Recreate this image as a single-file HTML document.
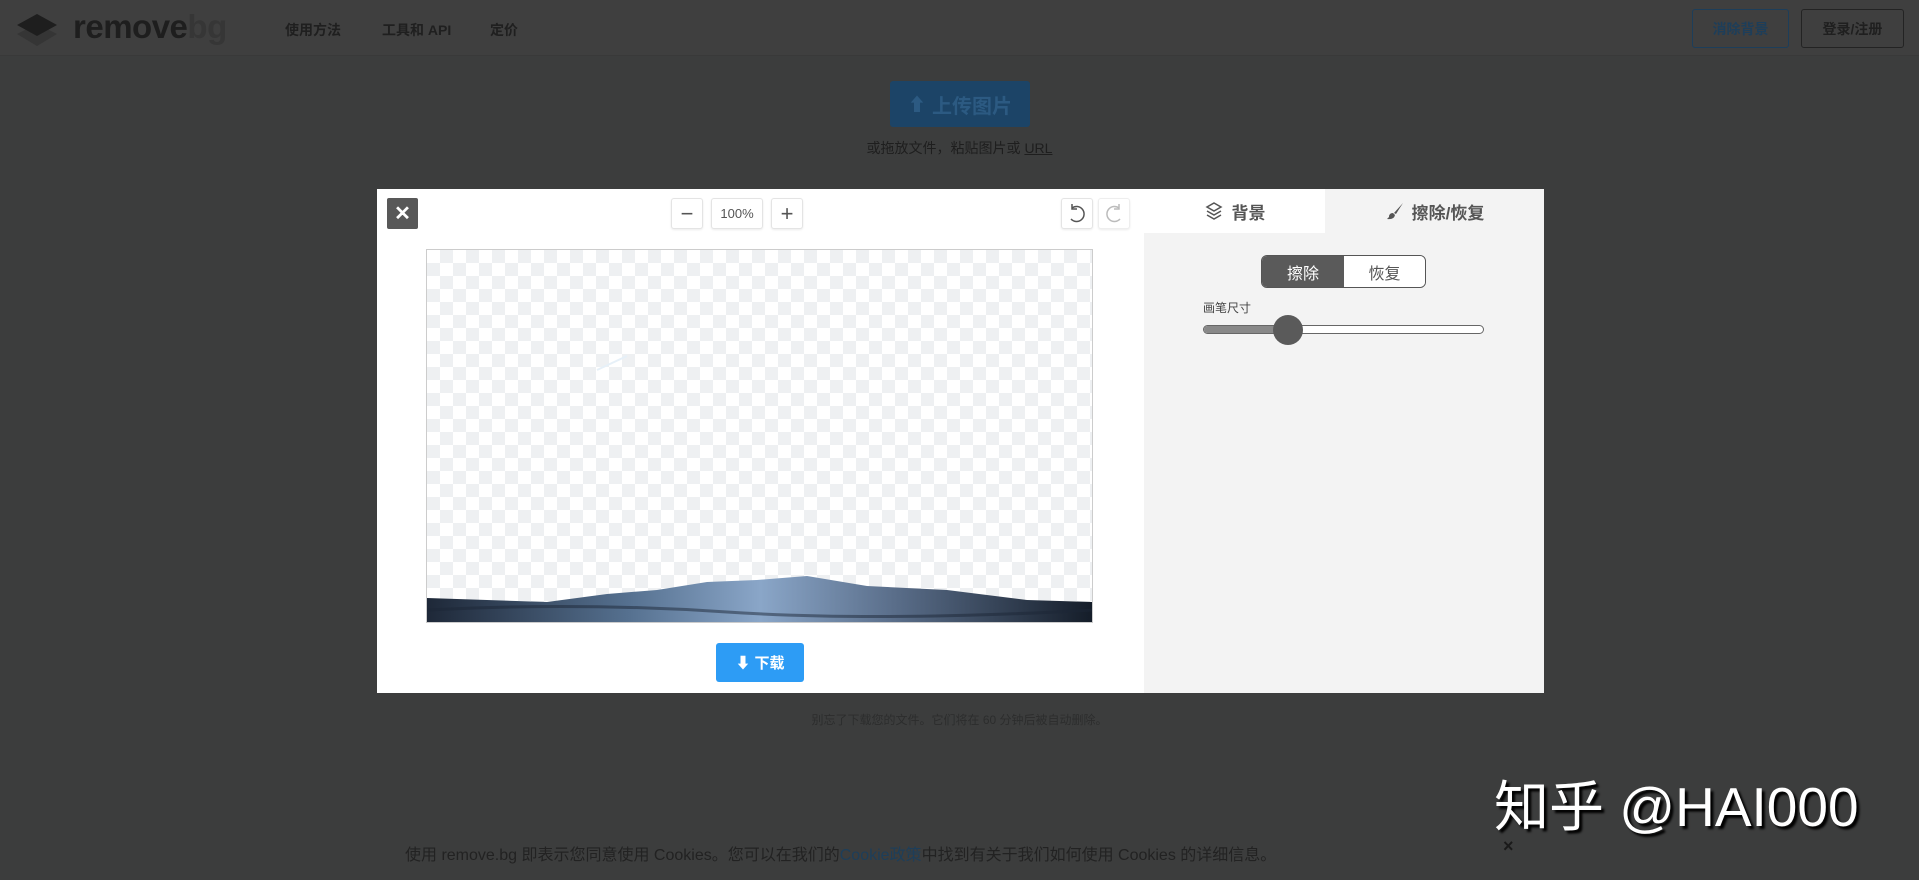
<!DOCTYPE html>
<html><head><meta charset="utf-8"><style>
*{box-sizing:border-box;margin:0;padding:0}
body{width:1919px;height:880px;background:#3c3d3d;font-family:"Liberation Sans","Noto Sans CJK SC",sans-serif;position:relative;overflow:hidden}
.a{position:absolute}
.nav{left:0;top:0;width:1919px;height:56px;background:#3f3f3f;border-bottom:1px solid #393939}
.navl{color:#1f1f1f;font-size:14px;font-weight:bold;top:20px}
.btn{border-radius:3px;font-size:14px;font-weight:bold;display:flex;align-items:center;justify-content:center}
.modal{left:377px;top:189px;width:1167px;height:504px;background:#fff}
.sq{width:32px;height:31px;border:1px solid #e4e4e4;border-radius:3px;background:#fff;display:flex;align-items:center;justify-content:center;color:#555;box-shadow:0 1px 2px rgba(0,0,0,.08)}
.canvas{left:49px;top:60px;width:667px;height:374px;border:1px solid #ccc;background-color:#fff;background-image:linear-gradient(45deg,#eef0f2 25%,transparent 25%,transparent 75%,#eef0f2 75%),linear-gradient(45deg,#eef0f2 25%,transparent 25%,transparent 75%,#eef0f2 75%);background-size:26px 26px;background-position:0 0,13px 13px;overflow:hidden}
</style></head><body>
<div class="a nav"></div>
<svg class="a" style="left:15px;top:14px" width="44" height="34" viewBox="0 0 44 34"><path d="M22 10 L42 20 L22 32 L2 20Z" fill="#353535"/><path d="M22 0 L42 11 L22 22 L2 11Z" fill="#1e1e1e"/></svg>
<div class="a" style="left:73px;top:8px;font-size:33px;font-weight:bold;color:#1e1e1e;letter-spacing:-0.5px">remove<span style="color:#363636">bg</span></div>
<div class="a navl" style="left:285px">使用方法</div>
<div class="a navl" style="left:382px">工具和 API</div>
<div class="a navl" style="left:490px">定价</div>
<div class="a btn" style="left:1692px;top:9px;width:97px;height:39px;border:1px solid #1d3e5a;color:#1d3e5a">消除背景</div>
<div class="a btn" style="left:1801px;top:9px;width:103px;height:39px;border:1px solid #232323;color:#1f1f1f">登录/注册</div>
<div class="a btn" style="left:890px;top:81px;width:140px;height:46px;background:#1c4467;color:#2c5a82;font-size:20px"><span style="font-size:18px;margin-right:6px">⬆</span>上传图片</div>
<div class="a" style="left:0;width:1919px;top:138px;text-align:center;font-size:14px;color:#1e1e1e">或拖放文件，粘贴图片或 <u>URL</u></div>
<div class="a" style="left:0;width:1919px;top:711px;text-align:center;font-size:12px;color:#2c2d2d">别忘了下载您的文件。它们将在 60 分钟后被自动删除。</div>

<div class="a modal">
 <div class="a" style="left:10px;top:9px;width:31px;height:31px;background:#585858;border-radius:2px;color:#fff;font-size:20px;font-weight:bold;display:flex;align-items:center;justify-content:center">✕</div>
 <div class="a sq" style="left:294px;top:9px;font-size:22px">−</div>
 <div class="a sq" style="left:334px;top:9px;width:52px;font-size:13px">100%</div>
 <div class="a sq" style="left:394px;top:9px;font-size:22px">+</div>
 <div class="a sq" style="left:684px;top:9px"><svg width="22" height="22" viewBox="0 0 22 22" fill="none" stroke="#555" stroke-width="1.5"><path d="M6 5 A7.5 7.5 0 1 1 5 16"/><path d="M6 1 V6 H11"/></svg></div>
 <div class="a sq" style="left:721px;top:9px;border-color:#eee"><svg width="22" height="22" viewBox="0 0 22 22" fill="none" stroke="#bbb" stroke-width="1.5"><path d="M16 5 A7.5 7.5 0 1 0 17 16"/><path d="M16 1 V6 H11"/></svg></div>
 <div class="a canvas">
  <svg class="a" style="left:0;top:0" width="667" height="374" viewBox="0 0 667 374"><defs><linearGradient id="m" x1="0" x2="1"><stop offset="0" stop-color="#1e2838"/><stop offset=".3" stop-color="#55708f"/><stop offset=".5" stop-color="#8aa6c8"/><stop offset=".7" stop-color="#5a6e8a"/><stop offset="1" stop-color="#141c28"/></linearGradient></defs><path d="M0 348 L60 350 L120 352 L180 344 L230 340 L280 332 L330 330 L380 326 L440 336 L520 340 L600 350 L667 352 L667 374 L0 374Z" fill="url(#m)"/><path d="M0 360 Q150 352 300 362 T667 360" stroke="#1b2535" stroke-width="3" fill="none" opacity=".5"/><path d="M200 106 L170 120" stroke="#e6f0f8" stroke-width="2"/></svg>
 </div>
 <div class="a btn" style="left:339px;top:454px;width:88px;height:39px;background:#2d9cf5;color:#fff;font-size:15px"><span style="margin-right:4px">⬇</span>下载</div>
 <div class="a" style="left:767px;top:0;width:400px;height:504px;background:#f3f3f3"></div>
 <div class="a" style="left:767px;top:0;width:181px;height:44px;background:#fff;display:flex;align-items:center;justify-content:center;font-size:17px;color:#555;font-weight:bold"><svg width="20" height="20" viewBox="0 0 20 20" fill="none" stroke="#555" stroke-width="1.5" style="margin-right:8px"><path d="M10 2 L17 6 L10 10 L3 6Z"/><path d="M3 10 L10 14 L17 10"/><path d="M3 14 L10 18 L17 14"/></svg>背景</div>
 <div class="a" style="left:948px;top:0;width:219px;height:44px;display:flex;align-items:center;justify-content:center;font-size:17px;color:#555;font-weight:bold"><svg width="20" height="20" viewBox="0 0 20 20" style="margin-right:7px"><path d="M18 2 L9 12 L11 13 Z" fill="#555"/><path d="M8 12 Q4 12 4 16 L2 18 Q9 19 10 14Z" fill="#555"/></svg>擦除/恢复</div>
 <div class="a" style="left:884px;top:66px;width:165px;height:33px;border:1px solid #555;border-radius:6px;overflow:hidden;display:flex;font-size:16px">
  <div style="width:82px;background:#5a5a5a;color:#fff;display:flex;align-items:center;justify-content:center">擦除</div>
  <div style="flex:1;background:#fff;color:#555;display:flex;align-items:center;justify-content:center">恢复</div>
 </div>
 <div class="a" style="left:826px;top:110px;font-size:12px;color:#444">画笔尺寸</div>
 <div class="a" style="left:826px;top:136px;width:281px;height:9px;border:1px solid #666;border-radius:5px;background:#fff;overflow:hidden"><div style="width:85px;height:100%;background:#888"></div></div>
 <div class="a" style="left:896px;top:126px;width:30px;height:30px;border-radius:50%;background:#5a5a5a"></div>
</div>

<div class="a" style="left:1494px;top:762px;font-size:55px;color:#fff;text-shadow:3px 3px 2px #000;font-family:'Liberation Sans','Noto Sans CJK SC',sans-serif">知乎 @HAI000</div>
<div class="a" style="left:405px;top:841px;font-size:16px;color:#222">使用 remove.bg 即表示您同意使用 Cookies。您可以在我们的<span style="color:#1d3e5a">Cookie政策</span>中找到有关于我们如何使用 Cookies 的详细信息。</div>
<div class="a" style="left:1503px;top:836px;font-size:18px;color:#1a1a1a;font-weight:bold">×</div>
</body></html>
